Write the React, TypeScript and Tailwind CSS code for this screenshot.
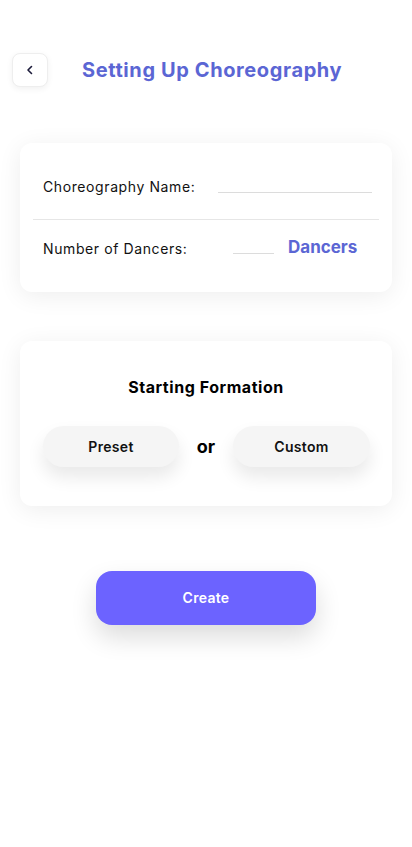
import React from "react";

export default function App() {
  const font = { fontFamily: "Inter, 'Noto Sans', sans-serif" };
  return (
    <div className="min-h-[847px] w-full bg-white" style={font}>
      <div className="flex items-center pt-[53px] pl-[12px]">
        <button className="flex h-[34px] w-[36px] items-center justify-center rounded-[8px] border border-[#eeeeee] bg-white shadow-[0_2px_6px_rgba(0,0,0,0.06)]">
          <svg width="8" height="10" viewBox="0 0 8 10" fill="none">
            <path d="M5.5 1.5L2 5l3.5 3.5" stroke="#1c1b3a" strokeWidth="1.6" strokeLinecap="round" strokeLinejoin="round" />
          </svg>
        </button>
        <h1 className="ml-[34px] text-[20px] font-bold tracking-[0.6px] text-[#5b66d4]">
          Setting Up Choreography
        </h1>
      </div>

      <div className="mx-5 mt-[56px] rounded-[12px] bg-white shadow-[0_4px_24px_rgba(0,0,0,0.07)]">
        <div className="flex h-[76px] items-center pt-[10px] pl-[23px] pr-[20px]">
          <span className="text-[14px] tracking-[0.6px] text-[#111111]">Choreography Name:</span>
          <div className="ml-auto mt-[12px] h-px w-[154px] bg-[#dcdcdc]" />
        </div>
        <div className="mx-[13px] h-px bg-[#e6e6e6]" />
        <div className="flex h-[72px] items-center pb-[16px] pl-[23px]">
          <span className="w-[190px] text-[14px] tracking-[0.6px] text-[#111111]">Number of Dancers:</span>
          <div className="mt-[10px] h-px w-[41px] bg-[#dcdcdc]" />
          <span className="ml-[14px] text-[17px] font-bold text-[#5b66d4]">Dancers</span>
        </div>
      </div>

      <div className="mx-5 mt-[49px] flex flex-col items-center rounded-[12px] bg-white pt-[35px] pb-[39px] shadow-[0_4px_24px_rgba(0,0,0,0.07)]">
        <h2 className="text-[16px] font-bold leading-[22px] tracking-[0.55px] text-black">Starting Formation</h2>
        <div className="mt-[28px] flex w-full items-center justify-between pr-[22px] pl-[23px]">
          <button className="flex h-[41px] w-[136px] items-center justify-center rounded-full bg-[#f5f5f5] text-[14px] font-semibold tracking-[0.3px] text-[#111111] shadow-[0_10px_18px_rgba(0,0,0,0.09)]">
            Preset
          </button>
          <span className="text-[18px] font-bold text-black">or</span>
          <button className="flex h-[41px] w-[137px] items-center justify-center rounded-full bg-[#f5f5f5] text-[14px] font-semibold tracking-[0.3px] text-[#111111] shadow-[0_10px_18px_rgba(0,0,0,0.09)]">
            Custom
          </button>
        </div>
      </div>

      <div className="mt-[65px] flex justify-center">
        <button className="flex h-[54px] w-[220px] items-center justify-center rounded-[16px] bg-[#6c63ff] pb-[2px] text-[14px] font-semibold tracking-[0.3px] text-white shadow-[0_12px_26px_rgba(0,0,0,0.14)]">
          Create
        </button>
      </div>
    </div>
  );
}
